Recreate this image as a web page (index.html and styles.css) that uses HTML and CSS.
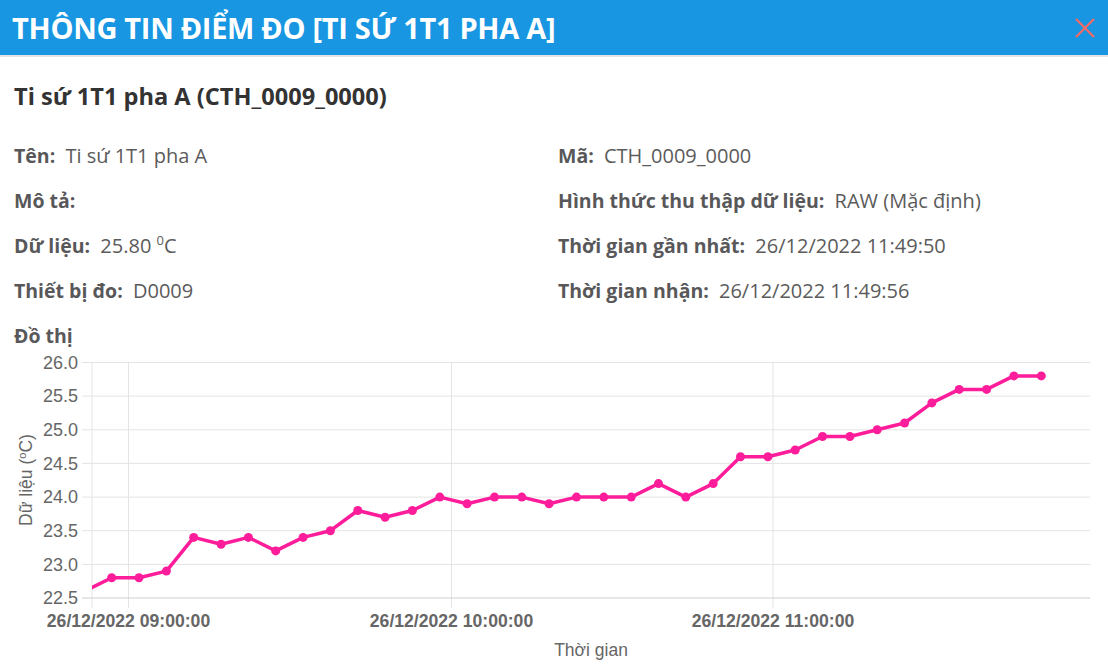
FILE: index.html
```html
<!DOCTYPE html>
<html lang="vi">
<head>
  <meta charset="UTF-8">
  <title>Thông tin điểm đo</title>
  <link rel="stylesheet" href="styles.css">
</head>
<body>
  <header class="modal-head">
    <h1>THÔNG TIN ĐIỂM ĐO [TI SỨ 1T1 PHA A]</h1>
    <button class="close" type="button" aria-label="Đóng">
      <svg width="20" height="20" viewBox="0 0 20 20">
        <path d="M1 1 L19 19 M19 1 L1 19" stroke="#f46a63" stroke-width="2.2" fill="none"/>
      </svg>
    </button>
  </header>

  <main class="modal-body">
    <h2 class="point-name">Ti sứ 1T1 pha A (CTH_0009_0000)</h2>

    <div class="info-grid">
      <div class="info-row"><span class="label">Tên:</span> <span class="value">Ti sứ 1T1 pha A</span></div>
      <div class="info-row"><span class="label">Mã:</span> <span class="value">CTH_0009_0000</span></div>
      <div class="info-row"><span class="label">Mô tả:</span> <span class="value"></span></div>
      <div class="info-row"><span class="label">Hình thức thu thập dữ liệu:</span> <span class="value">RAW (Mặc định)</span></div>
      <div class="info-row"><span class="label">Dữ liệu:</span> <span class="value">25.80 <sup>0</sup>C</span></div>
      <div class="info-row"><span class="label">Thời gian gần nhất:</span> <span class="value">26/12/2022 11:49:50</span></div>
      <div class="info-row"><span class="label">Thiết bị đo:</span> <span class="value">D0009</span></div>
      <div class="info-row"><span class="label">Thời gian nhận:</span> <span class="value">26/12/2022 11:49:56</span></div>
    </div>

    <h3 class="chart-title">Đồ thị</h3>
  </main>

  <svg class="chart" width="1108" height="324" viewBox="0 348 1108 324">
    <defs>
      <clipPath id="plot">
        <rect x="92" y="350" width="998" height="250"/>
      </clipPath>
    </defs>

    <!-- luoi ngang -->
    <g class="grid">
      <line x1="82" y1="362.5" x2="1090" y2="362.5"/>
      <line x1="82" y1="396.1" x2="1090" y2="396.1"/>
      <line x1="82" y1="429.8" x2="1090" y2="429.8"/>
      <line x1="82" y1="463.4" x2="1090" y2="463.4"/>
      <line x1="82" y1="497.1" x2="1090" y2="497.1"/>
      <line x1="82" y1="530.7" x2="1090" y2="530.7"/>
      <line x1="82" y1="564.4" x2="1090" y2="564.4"/>
      <line x1="92" y1="362.5" x2="92" y2="608"/>
      <line x1="128.5" y1="362.5" x2="128.5" y2="608"/>
      <line x1="451.5" y1="362.5" x2="451.5" y2="608"/>
      <line x1="773" y1="362.5" x2="773" y2="608"/>
    </g>
    <line class="axis" x1="82" y1="598" x2="1090" y2="598"/>

    <g class="y-ticks">
      <text x="78" y="368.7">26.0</text>
      <text x="78" y="402.3">25.5</text>
      <text x="78" y="436">25.0</text>
      <text x="78" y="469.6">24.5</text>
      <text x="78" y="503.3">24.0</text>
      <text x="78" y="536.9">23.5</text>
      <text x="78" y="570.6">23.0</text>
      <text x="78" y="604.2">22.5</text>
    </g>
    <text class="axis-title" transform="translate(32 480) rotate(-90)">Dữ liệu (<tspan>o</tspan>C)</text>

    <g class="x-ticks">
      <text x="128.5" y="627">26/12/2022 09:00:00</text>
      <text x="451.5" y="627">26/12/2022 10:00:00</text>
      <text x="773" y="627">26/12/2022 11:00:00</text>
    </g>
    <text class="axis-title" x="591" y="656">Thời gian</text>

    <g clip-path="url(#plot)">
      <polyline class="series" points="84.4,591.3 111.7,577.8 139,577.8 166.4,571.1 193.7,537.4 221.1,544.2 248.4,537.4 275.7,550.9 303.1,537.4 330.4,530.7 357.8,510.5 385.1,517.3 412.4,510.5 439.8,497.1 467.1,503.8 494.5,497.1 521.8,497.1 549.1,503.8 576.5,497.1 603.8,497.1 631.2,497.1 658.5,483.6 685.8,497.1 713.2,483.6 740.5,456.7 767.9,456.7 795.2,450 822.5,436.5 849.9,436.5 877.2,429.8 904.6,423 931.9,402.9 959.2,389.4 986.6,389.4 1013.9,375.9 1041.3,375.9"/>
    </g>
    <g class="dots">
      <circle cx="111.7" cy="577.8" r="4.5"/>
      <circle cx="139" cy="577.8" r="4.5"/>
      <circle cx="166.4" cy="571.1" r="4.5"/>
      <circle cx="193.7" cy="537.4" r="4.5"/>
      <circle cx="221.1" cy="544.2" r="4.5"/>
      <circle cx="248.4" cy="537.4" r="4.5"/>
      <circle cx="275.7" cy="550.9" r="4.5"/>
      <circle cx="303.1" cy="537.4" r="4.5"/>
      <circle cx="330.4" cy="530.7" r="4.5"/>
      <circle cx="357.8" cy="510.5" r="4.5"/>
      <circle cx="385.1" cy="517.3" r="4.5"/>
      <circle cx="412.4" cy="510.5" r="4.5"/>
      <circle cx="439.8" cy="497.1" r="4.5"/>
      <circle cx="467.1" cy="503.8" r="4.5"/>
      <circle cx="494.5" cy="497.1" r="4.5"/>
      <circle cx="521.8" cy="497.1" r="4.5"/>
      <circle cx="549.1" cy="503.8" r="4.5"/>
      <circle cx="576.5" cy="497.1" r="4.5"/>
      <circle cx="603.8" cy="497.1" r="4.5"/>
      <circle cx="631.2" cy="497.1" r="4.5"/>
      <circle cx="658.5" cy="483.6" r="4.5"/>
      <circle cx="685.8" cy="497.1" r="4.5"/>
      <circle cx="713.2" cy="483.6" r="4.5"/>
      <circle cx="740.5" cy="456.7" r="4.5"/>
      <circle cx="767.9" cy="456.7" r="4.5"/>
      <circle cx="795.2" cy="450" r="4.5"/>
      <circle cx="822.5" cy="436.5" r="4.5"/>
      <circle cx="849.9" cy="436.5" r="4.5"/>
      <circle cx="877.2" cy="429.8" r="4.5"/>
      <circle cx="904.6" cy="423" r="4.5"/>
      <circle cx="931.9" cy="402.9" r="4.5"/>
      <circle cx="959.2" cy="389.4" r="4.5"/>
      <circle cx="986.6" cy="389.4" r="4.5"/>
      <circle cx="1013.9" cy="375.9" r="4.5"/>
      <circle cx="1041.3" cy="375.9" r="4.5"/>
    </g>
  </svg>
</body>
</html>
```

FILE: styles.css
```css
body {
  margin: 0;
  font-family: "Open Sans", Arial, sans-serif;
  background: #fff;
  overflow: hidden;
}
.modal-head {
  height: 55px;
  background-color: #1896e2;
  border-bottom: 2px solid #e3e3e3;
  display: flex;
  align-items: center;
  justify-content: space-between;
  padding: 0 12px;
}
.modal-head h1 {
  margin: 0;
  color: #fff;
  font-size: 29px;
  font-weight: 700;
  letter-spacing: -0.3px;
  line-height: 55px;
}
.close {
  border: 0;
  background: none;
  padding: 0;
  margin: 0 1px 0 0;
  width: 20px;
  height: 20px;
  cursor: pointer;
}
.close svg {
  display: block;
}
.modal-body {
  padding: 0 14px;
}
.point-name {
  margin: 23px 0 0;
  font-size: 23.6px;
  line-height: 32px;
  font-weight: 700;
  color: #333;
}
.info-grid {
  margin-top: 21px;
  display: grid;
  grid-template-columns: 544px 1fr;
}
.info-row {
  font-size: 20px;
  line-height: 45px;
  height: 45px;
  color: #5b5b5b;
  white-space: nowrap;
}
.label {
  font-size: 19.5px;
  font-weight: 700;
  color: #58585a;
  margin-right: 5px;
}
.value sup {
  font-size: 13px;
  vertical-align: 8px;
  line-height: 0;
}
.chart-title {
  margin: 11px 0 0;
  font-size: 19.5px;
  line-height: 24px;
  font-weight: 700;
  color: #58585a;
}
.chart {
  display: block;
  font-family: "Liberation Sans", Arial, sans-serif;
}
.grid line {
  stroke: #e4e4e4;
  stroke-width: 1;
}
.axis {
  stroke: #cfcfcf;
  stroke-width: 1;
}
.y-ticks text {
  font-size: 18px;
  fill: #666;
  text-anchor: end;
}
.x-ticks text {
  font-size: 17.6px;
  font-weight: 700;
  fill: #666;
  text-anchor: middle;
}
.axis-title {
  font-size: 17.5px;
  fill: #666;
  text-anchor: middle;
}
.axis-title tspan {
  font-size: 11px;
  baseline-shift: 6px;
}
.series {
  fill: none;
  stroke: #fd1d9b;
  stroke-width: 3.5;
  stroke-linejoin: round;
}
.dots circle {
  fill: #fd1d9b;
}
```
